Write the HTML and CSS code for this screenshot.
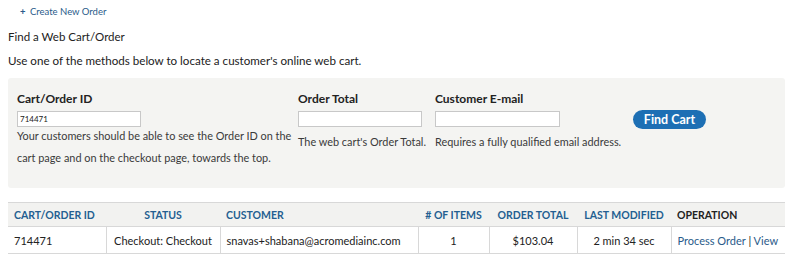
FILE: index.html
```html
<!DOCTYPE html>
<html lang="en">
<head>
    <meta charset="UTF-8">
    <title>Find a Web Cart/Order</title>
    <link rel="stylesheet" href="styles.css">
</head>
<body>
    <div class="actions">
        <a href="#" class="create-link"><span class="plus">+</span> Create New Order</a>
    </div>
    <h2 class="page-title">Find a Web Cart/Order</h2>
    <p class="intro">Use one of the methods below to locate a customer's online web cart.</p>

    <form class="find-box" onsubmit="return false;">
        <div class="field field-id">
            <label for="orderId">Cart/Order ID</label>
            <input type="text" id="orderId" value="714471">
            <div class="desc">Your customers should be able to see the Order ID on the cart page and on the checkout page, towards the top.</div>
        </div>
        <div class="field field-total">
            <label for="orderTotal">Order Total</label>
            <input type="text" id="orderTotal">
            <div class="desc desc-low">The web cart's Order Total.</div>
        </div>
        <div class="field field-mail">
            <label for="orderMail">Customer E-mail</label>
            <input type="text" id="orderMail">
            <div class="desc desc-low">Requires a fully qualified email address.</div>
        </div>
        <div class="field field-btn">
            <button type="submit">Find Cart</button>
        </div>
    </form>

    <table class="results">
        <colgroup>
            <col style="width: 98px">
            <col style="width: 114px">
            <col style="width: 198px">
            <col style="width: 71px">
            <col style="width: 88px">
            <col style="width: 94px">
            <col style="width: 117px">
        </colgroup>
        <thead>
            <tr>
                <th><a href="#">Cart/Order ID</a></th>
                <th class="center"><a href="#">Status</a></th>
                <th><a href="#">Customer</a></th>
                <th class="center"><a href="#"># of Items</a></th>
                <th class="center"><a href="#">Order Total</a></th>
                <th class="center"><a href="#">Last Modified</a></th>
                <th>Operation</th>
            </tr>
        </thead>
        <tbody>
            <tr>
                <td>714471</td>
                <td class="center">Checkout: Checkout</td>
                <td>snavas+shabana@acromediainc.com</td>
                <td class="center">1</td>
                <td class="center">$103.04</td>
                <td class="center">2 min 34 sec</td>
                <td><a href="#">Process Order</a> | <a href="#">View</a></td>
            </tr>
        </tbody>
    </table>
</body>
</html>
```

FILE: styles.css
```css
* {
    margin: 0;
    padding: 0;
    box-sizing: border-box;
}
body {
    margin: 0 8px;
    font-family: 'Lato', 'DejaVu Sans', sans-serif;
    font-size: 11px;
    color: #222;
    background: white;
}
a {
    color: #2a5b8a;
    text-decoration: none;
}
.actions {
    padding: 6px 0 0 12px;
    height: 25px;
    font-size: 9.5px;
}
.plus {
    font-weight: bold;
    margin-right: 2px;
}
.page-title {
    font-size: 11.5px;
    font-weight: normal;
    line-height: 24px;
}
.intro {
    font-size: 11.6px;
    line-height: 24px;
    margin-bottom: 5px;
}
.find-box {
    background: #f4f4f2;
    border-radius: 3px;
    height: 110px;
    padding: 12px 9px 0;
    display: flex;
}
.field label {
    display: block;
    font-weight: bold;
    font-size: 12px;
    line-height: 18px;
    margin-bottom: 3px;
}
.field input {
    display: block;
    width: 124px;
    height: 16px;
    border: 1px solid #c8c8c8;
    background: white;
    font-family: inherit;
    font-size: 8px;
    padding: 0 2px;
    color: #222;
}
.field-mail input {
    width: 125px;
}
.desc {
    font-size: 10.9px;
    line-height: 22px;
    color: #3a3a3a;
    margin-top: -2px;
}
.desc-low {
    margin-top: 4px;
}
.field-id {
    width: 281px;
}
.field-total {
    width: 137px;
}
.field-mail {
    width: 198px;
}
.field-btn {
    padding-top: 20px;
}
.field-btn button {
    background: #1d6fb4;
    color: white;
    border: none;
    border-radius: 10px;
    width: 73px;
    height: 19px;
    font-family: inherit;
    font-size: 12.5px;
    font-weight: bold;
    cursor: pointer;
}
.results {
    margin-top: 14px;
    width: 780px;
    table-layout: fixed;
    border-collapse: collapse;
    font-size: 11px;
}
.results th {
    background: #f2f2f0;
    border-top: 1px solid #d8d8d8;
    border-bottom: 1px solid #d8d8d8;
    height: 24px;
    padding: 0 6px;
    text-align: left;
    text-transform: uppercase;
    font-size: 10.5px;
    font-weight: bold;
    white-space: nowrap;
}
.results th a {
    color: #245f91;
}
.results td {
    border: 1px solid #d8d8d8;
    border-top: none;
    height: 27px;
    padding: 0 6px;
    white-space: nowrap;
}
.results td:first-child {
    border-left: none;
}
.results td:last-child {
    border-right: none;
}
.results .center {
    text-align: center;
}
```
